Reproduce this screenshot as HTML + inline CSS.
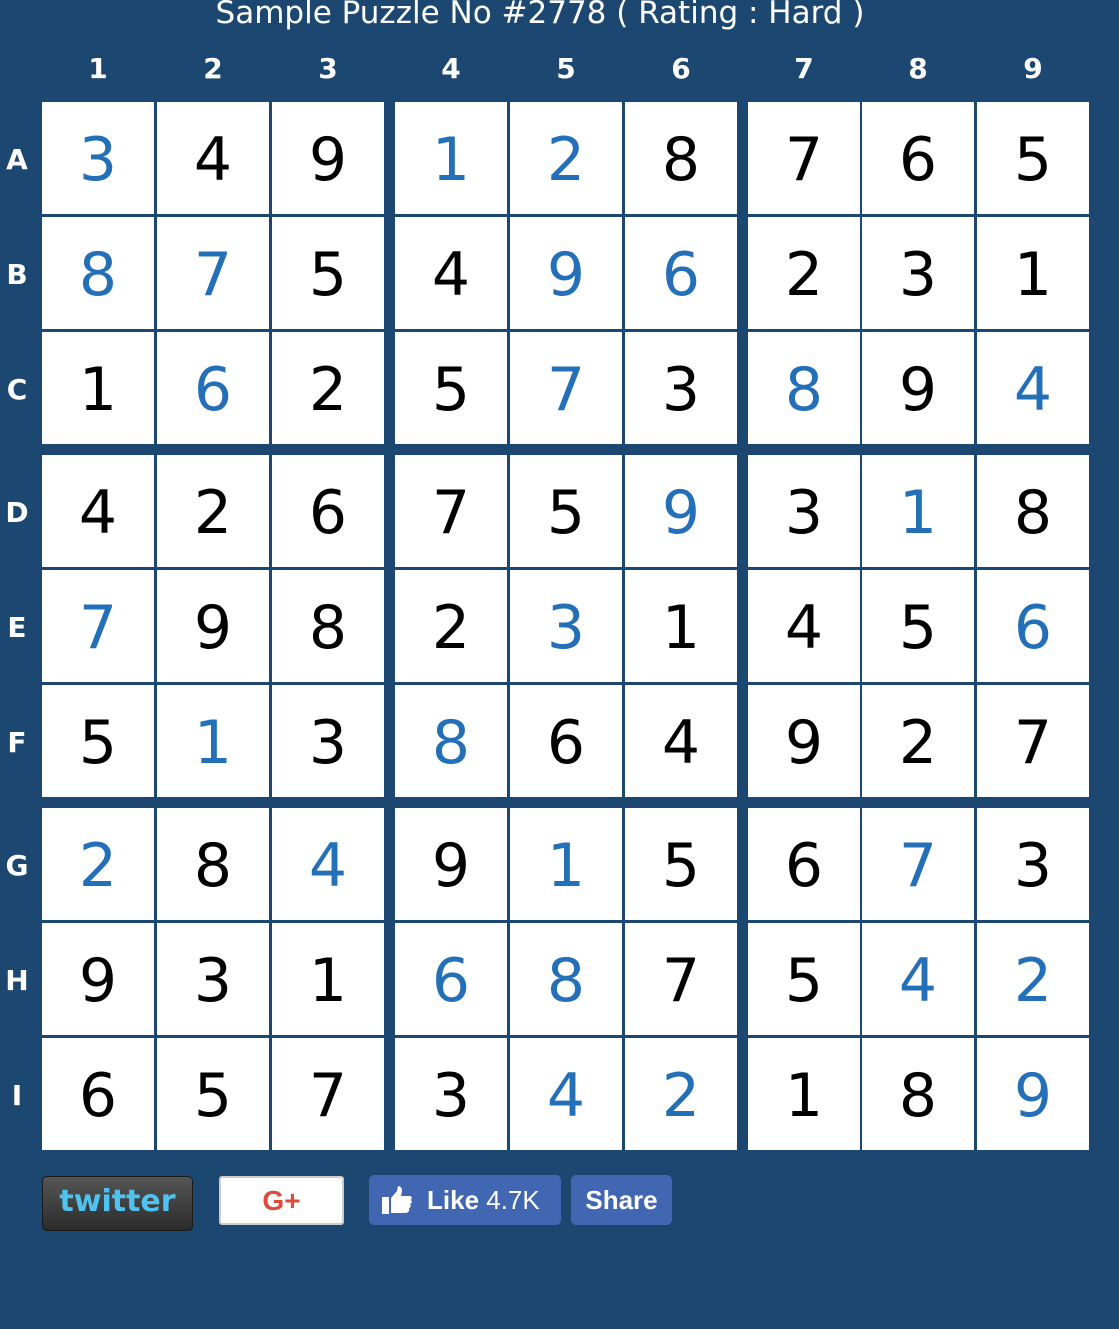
<!DOCTYPE html>
<html><head><meta charset="utf-8"><style>
body{margin:0;width:1119px;height:1329px;background:#1c4770;position:relative;overflow:hidden;font-family:"Liberation Sans",sans-serif}
.c{position:absolute;width:112px;height:112px;background:#fff;text-align:center;line-height:116px;font-size:60px;color:#000;font-family:"DejaVu Sans","Liberation Sans",sans-serif;font-weight:normal}
.b{color:#2470b8}
.h{position:absolute;color:#fff;font-weight:bold;font-size:28px;text-align:center;font-family:"DejaVu Sans",sans-serif}
.t{position:absolute;top:-5px;left:0;width:1080px;text-align:center;color:#fff;font-size:31px;font-family:"DejaVu Sans",sans-serif}
.btn{position:absolute;top:1175px;height:50px;border-radius:5px}
</style></head><body>
<div class="t">Sample Puzzle No #2778 ( Rating : Hard )</div>
<div id="g"></div>
<div class="btn" style="left:42px;top:1176px;width:151px;height:55px;background:linear-gradient(#555,#2c2c2c);border:1px solid #1a1a1a;box-sizing:border-box;text-align:center;line-height:50px;color:#4fc3f0;font-weight:bold;font-size:30px;font-family:'DejaVu Sans',sans-serif">twitter</div>
<div class="btn" style="left:219px;top:1176px;width:125px;height:49px;background:#fff;border:2px solid #ccc;box-sizing:border-box;border-radius:3px;text-align:center;line-height:45px;color:#dd4b39;font-weight:bold;font-size:28px">G+</div>
<div class="btn" style="left:369px;width:192px;background:#4267b2;color:#fff;font-weight:bold;font-size:26px;line-height:50px">
<svg style="position:absolute;left:12px;top:10px" width="32" height="30" viewBox="0 0 32 30"><rect x="1" y="12" width="7" height="17" fill="#fff"/><path d="M10 13 L16 6 L17 1 Q21 1 21 6 L20 11 L29 11 Q32 12 30 15 Q32 18 29 19 Q31 22 28 23 Q29 27 25 28 L10 28 Z" fill="#fff"/></svg>
<span style="position:absolute;left:58px">Like <span style="font-weight:normal">4.7K</span></span></div>
<div class="btn" style="left:571px;width:101px;background:#4267b2;color:#fff;font-weight:bold;font-size:26px;line-height:50px;text-align:center">Share</div>
<script>
var X=[42,157,272,395,510,625,748,862,977],Y=[102,217,332,455,570,685,808,923,1038];
var V=["349128765","875496231","162573894","426759318","798231456","513864927","284915673","931687542","657342189"];
var B=["100110000","110011000","010010101","000001010","100010001","010100000","101010010","000110011","000011001"];
var L="ABCDEFGHI",h="";
for(var i=0;i<9;i++){h+='<div class="h" style="left:'+(X[i])+'px;top:52px;width:112px">'+(i+1)+'</div>';
h+='<div class="h" style="left:0;width:34px;top:'+(Y[i]+41)+'px">'+L[i]+'</div>';
for(var j=0;j<9;j++)h+='<div class="c'+(B[i][j]=="1"?' b':'')+'" style="left:'+X[j]+'px;top:'+Y[i]+'px">'+V[i][j]+'</div>';}
document.getElementById("g").innerHTML=h;
</script>
</body></html>
